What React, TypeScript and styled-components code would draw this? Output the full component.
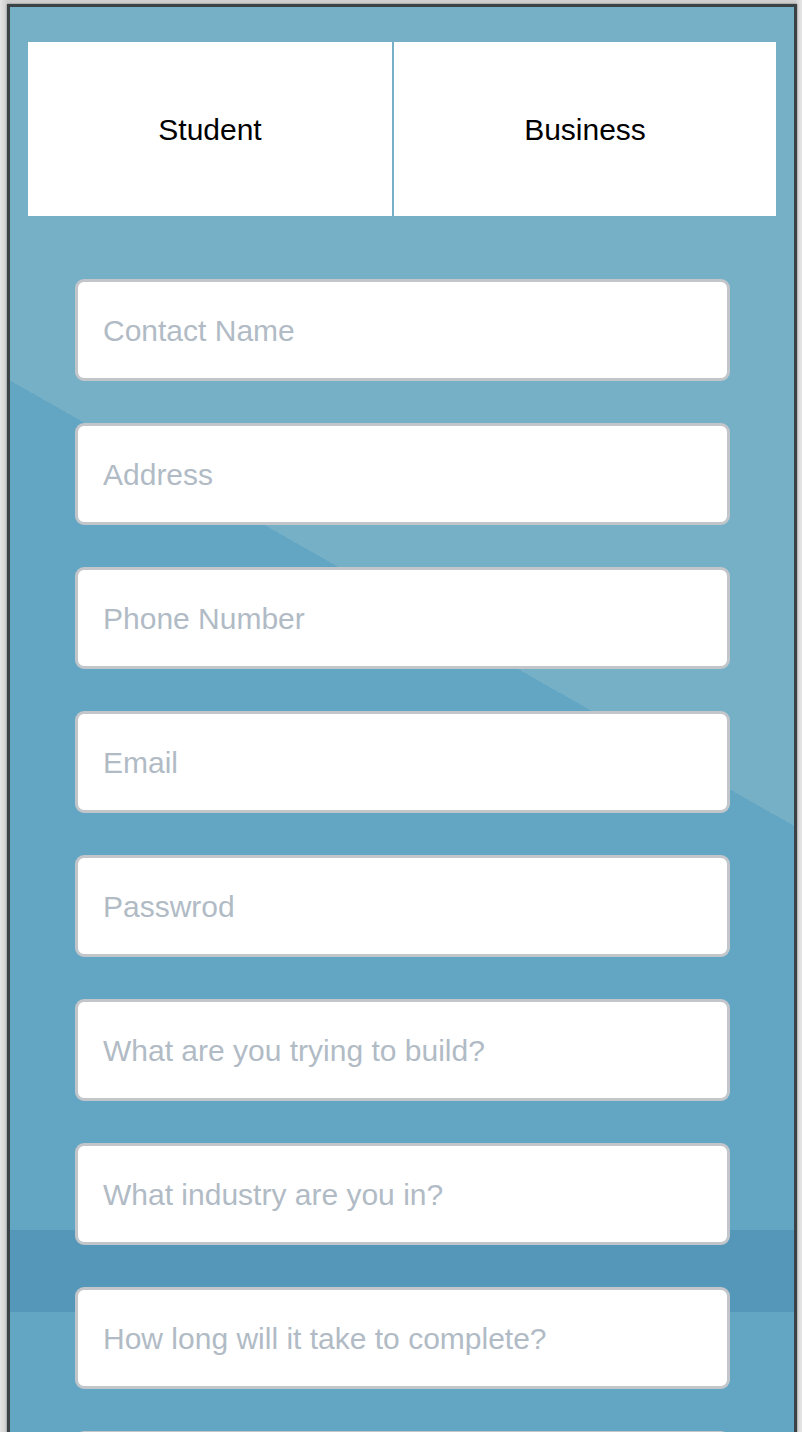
import React from "react";
import styled, { createGlobalStyle } from "styled-components";

const GlobalStyle = createGlobalStyle`
  html, body {
    margin: 0;
    padding: 0;
  }
  body {
    background: linear-gradient(to right, #e4e4e4 0px, #cfcfcf 7px, #cfcfcf 795px, #e6e6e6 802px);
    font-family: "Liberation Sans", Arial, sans-serif;
  }
  * { box-sizing: border-box; }
`;

const Frame = styled.div`
  margin: 4px 5px 0 7px;
  min-height: 1428px;
  border: 3px solid #3b4246;
  border-bottom: none;
  box-shadow: 0 0 2px rgba(0, 0, 0, 0.45);
  padding: 35px 18px 0 18px;
  background-color: #63a6c3;
  background-image:
    linear-gradient(to bottom, transparent 1223px, #5597b8 1223px, #5597b8 1305px, transparent 1305px),
    linear-gradient(209.6deg, #75b0c7 712px, #63a6c3 712px);
  background-size: 784px 1432px, 784px 1432px;
  background-repeat: no-repeat;
`;

const Tabs = styled.div`
  display: grid;
  grid-template-columns: 364fr 382fr;
  column-gap: 2px;
  height: 174px;
`;

const Tab = styled.button`
  display: flex;
  align-items: center;
  justify-content: center;
  border: none;
  margin: 0;
  padding: 2px 0 0;
  background: #ffffff;
  color: #000000;
  font-family: "Liberation Sans", Arial, sans-serif;
  font-size: 30px;
  cursor: pointer;
`;

const Form = styled.form`
  display: flex;
  flex-direction: column;
  gap: 42px;
  width: 655px;
  margin: 63px 0 0 47px;
  padding-bottom: 40px;
`;

const Field = styled.input`
  display: block;
  width: 100%;
  height: 102px;
  border: 3px solid #c2c6ca;
  border-radius: 9px;
  background: #ffffff;
  padding: 2px 0 0 25px;
  font-family: "Liberation Sans", Arial, sans-serif;
  font-size: 30px;
  color: #333;
  outline: none;
  &::placeholder {
    color: #b1bbc5;
    opacity: 1;
  }
`;

const fields = [
  { placeholder: "Contact Name", type: "text" },
  { placeholder: "Address", type: "text" },
  { placeholder: "Phone Number", type: "tel" },
  { placeholder: "Email", type: "email" },
  { placeholder: "Passwrod", type: "password" },
  { placeholder: "What are you trying to build?", type: "text" },
  { placeholder: "What industry are you in?", type: "text" },
  { placeholder: "How long will it take to complete?", type: "text" },
  { placeholder: "Budget", type: "text" },
];

export default function App() {
  return (
    <>
      <GlobalStyle />
      <Frame>
        <Tabs>
          <Tab type="button">Student</Tab>
          <Tab type="button">Business</Tab>
        </Tabs>
        <Form onSubmit={(e) => e.preventDefault()}>
          {fields.map((f) => (
            <Field key={f.placeholder} type={f.type} placeholder={f.placeholder} />
          ))}
        </Form>
      </Frame>
    </>
  );
}
